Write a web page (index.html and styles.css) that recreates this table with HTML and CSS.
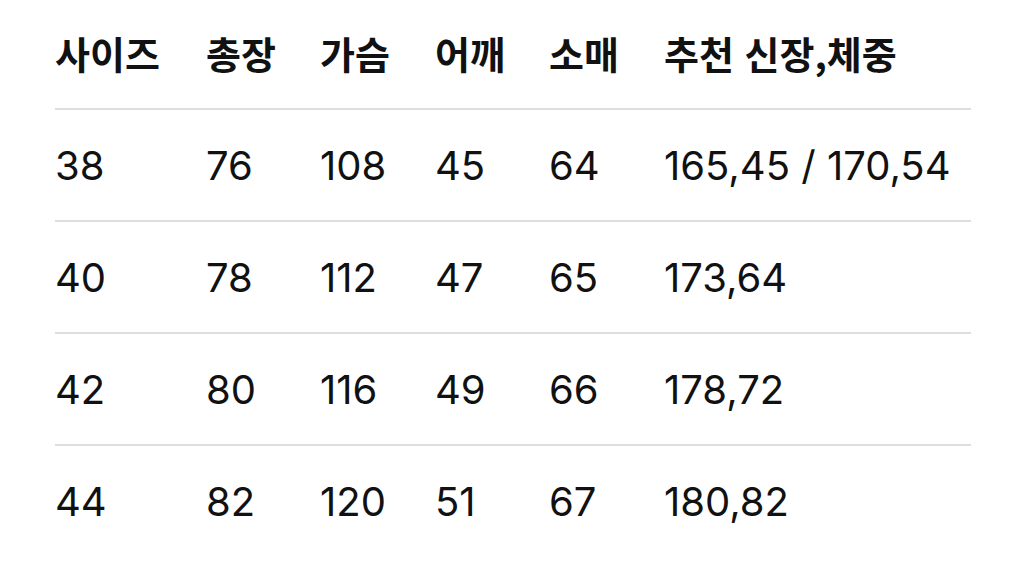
FILE: index.html
```html
<!DOCTYPE html>
<html lang="ko">
<head>
<meta charset="utf-8">
<link rel="stylesheet" href="styles.css">
</head>
<body>
<table class="size-table">
  <colgroup>
    <col class="c1"><col class="c2"><col class="c3"><col class="c4"><col class="c5"><col class="c6">
  </colgroup>
  <thead>
    <tr><th>사이즈</th><th>총장</th><th>가슴</th><th>어깨</th><th>소매</th><th>추천 신장,체중</th></tr>
  </thead>
  <tbody>
    <tr><td>38</td><td>76</td><td>108</td><td>45</td><td>64</td><td>165,45 / 170,54</td></tr>
    <tr><td>40</td><td>78</td><td>112</td><td>47</td><td>65</td><td>173,64</td></tr>
    <tr><td>42</td><td>80</td><td>116</td><td>49</td><td>66</td><td>178,72</td></tr>
    <tr class="last"><td>44</td><td>82</td><td>120</td><td>51</td><td>67</td><td>180,82</td></tr>
  </tbody>
</table>
</body>
</html>
```
FILE: styles.css
```css
html, body {
  margin: 0;
  padding: 0;
  background: #fff;
}
body {
  padding-left: 55px;
  font-family: Inter, "Noto Sans CJK KR", sans-serif;
  color: #111;
}
.size-table {
  width: 916px;
  border-collapse: collapse;
  table-layout: fixed;
}
.c1 { width: 151px; }
.c2 { width: 114px; }
.c3 { width: 115px; }
.c4 { width: 114px; }
.c5 { width: 115px; }
.size-table th,
.size-table td {
  text-align: left;
  padding: 0;
  white-space: nowrap;
  border-bottom: 2px solid #dedede;
}
.size-table th {
  height: 109px;
  font-size: 38px;
  font-weight: 600;
  font-family: "Noto Sans CJK KR", sans-serif;
  padding-bottom: 4px;
  box-sizing: border-box;
}
.size-table td {
  height: 110px;
  font-size: 40px;
  font-weight: 400;
}
.size-table tr.last td {
  border-bottom: none;
}
```
